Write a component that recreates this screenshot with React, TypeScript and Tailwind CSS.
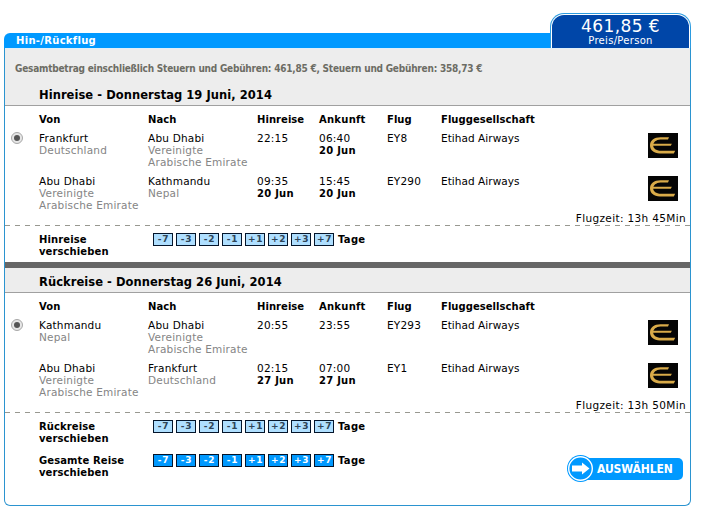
type Stop = {
  city: string
  country: string[]
}

type Segment = {
  from: Stop
  to: Stop
  departure: string
  departureDay?: string
  arrival: string
  arrivalDay?: string
  flight: string
}

type Trip = {
  title: string
  shiftLabel: string
  duration: string
  segments: Segment[]
}

const shifts = ['-7', '-3', '-2', '-1', '+1', '+2', '+3', '+7']

const abuDhabi: Stop = { city: 'Abu Dhabi', country: ['Vereinigte', 'Arabische Emirate'] }
const frankfurt: Stop = { city: 'Frankfurt', country: ['Deutschland'] }
const kathmandu: Stop = { city: 'Kathmandu', country: ['Nepal'] }

const trips: Trip[] = [
  {
    title: 'Hinreise - Donnerstag 19 Juni, 2014',
    shiftLabel: 'Hinreise',
    duration: '13h 45Min',
    segments: [
      { from: frankfurt, to: abuDhabi, departure: '22:15', arrival: '06:40', arrivalDay: '20 Jun', flight: 'EY8' },
      { from: abuDhabi, to: kathmandu, departure: '09:35', departureDay: '20 Jun', arrival: '15:45', arrivalDay: '20 Jun', flight: 'EY290' },
    ],
  },
  {
    title: 'Rückreise - Donnerstag 26 Juni, 2014',
    shiftLabel: 'Rückreise',
    duration: '13h 50Min',
    segments: [
      { from: kathmandu, to: abuDhabi, departure: '20:55', arrival: '23:55', flight: 'EY293' },
      { from: abuDhabi, to: frankfurt, departure: '02:15', departureDay: '27 Jun', arrival: '07:00', arrivalDay: '27 Jun', flight: 'EY1' },
    ],
  },
]

function AirlineLogo() {
  return (
    <svg className="mt-px h-[25px] w-[30px]" viewBox="0 0 30 25">
      <rect width="30" height="25" fill="#050505" />
      <g fill="#d9ab49">
        <path d="M21 4.2 20 6.4H12.5C8 6.6 5.2 9.2 5.2 12.3S8 17.8 13 17.8H27.2L25.8 20.4H12C5.5 20.4 2 17 2 12.3S6 4.2 12.5 4.2Z" />
        <path d="M5 10.8H23.8L22.8 12.8H5Z" />
      </g>
    </svg>
  )
}

function Place({ stop }: { stop: Stop }) {
  return (
    <div className="whitespace-nowrap">
      <div>{stop.city}</div>
      {stop.country.map((line) => (
        <div key={line} className="text-[#858585]">{line}</div>
      ))}
    </div>
  )
}

function Time({ time, day }: { time: string; day?: string }) {
  return (
    <div>
      <div>{time}</div>
      {day && <div className="pt-px text-[10px] font-bold tracking-[0.25px]">{day}</div>}
    </div>
  )
}

function ShiftRow({ label, solid = false }: { label: string; solid?: boolean }) {
  return (
    <div className="flex h-[29px] items-start pl-[34px] text-[10px] font-bold tracking-[0.1px]">
      <div className="w-[114px] pt-px">
        {label}
        <br />
        verschieben
      </div>
      <div className="flex gap-[3px]">
        {shifts.map((shift) => (
          <button
            key={shift}
            className={
              solid
                ? 'h-[13px] w-5 border border-[#04152b] bg-[#0099ff] pl-px text-[9px] leading-[11px] tracking-[0.7px] text-white'
                : 'h-[13px] w-5 border border-[#04152b] bg-[#afdfff] pl-px text-[9px] leading-[11px] tracking-[0.7px] text-[#2d4457]'
            }
          >
            {shift}
          </button>
        ))}
      </div>
      <div className="pt-px pl-1 tracking-[0.3px]">Tage</div>
    </div>
  )
}

function TripSection({ trip }: { trip: Trip }) {
  return (
    <section>
      <h2 className="flex h-[25px] items-center border-b border-[#a0a0a0] bg-[#ededed] pt-[4px] pl-[34px] text-[11.5px] font-bold tracking-[0.05px]">
        {trip.title}
      </h2>
      <div className="grid h-[26px] grid-cols-[109px_109px_62px_68px_54px_1fr] items-center pt-px pl-[34px] text-[10px] font-bold tracking-[0.05px]">
        <div>Von</div>
        <div>Nach</div>
        <div>Hinreise</div>
        <div className="tracking-[0.25px]">Ankunft</div>
        <div>Flug</div>
        <div>Fluggesellschaft</div>
      </div>
      <div className="flex">
        <div className="w-[34px] pl-1.5">
          <div className="flex h-3 w-3 items-center justify-center rounded-full border border-[#a8a8a8] bg-[#e6e6e6]">
            <div className="h-1.5 w-1.5 rounded-full bg-[#555]" />
          </div>
        </div>
        <div className="flex-1">
          {trip.segments.map((segment) => (
            <div key={segment.flight} className="grid h-[43px] grid-cols-[109px_109px_62px_68px_54px_1fr_42px]">
              <Place stop={segment.from} />
              <Place stop={segment.to} />
              <Time time={segment.departure} day={segment.departureDay} />
              <Time time={segment.arrival} day={segment.arrivalDay} />
              <div>{segment.flight}</div>
              <div className="tracking-[0.05px]">Etihad Airways</div>
              <AirlineLogo />
            </div>
          ))}
        </div>
      </div>
      <div className="-mt-[6px] h-[13px] pr-1 text-right tracking-[0.35px]">Flugzeit: {trip.duration}</div>
      <div className="h-px bg-[repeating-linear-gradient(90deg,#989890_0_5px,#fff_5px_10px)]" />
      <div className="pt-[7px]">
        <ShiftRow label={trip.shiftLabel} />
      </div>
    </section>
  )
}

function SelectButton() {
  return (
    <button className="relative mt-px flex h-[27px] w-[116px] items-center">
      <span className="ml-4 flex h-[22px] w-[100px] items-center rounded-[5px] bg-[#0099ff] pl-[14px] font-['DejaVu_Sans_Condensed','DejaVu_Sans',sans-serif] text-[12px] font-bold tracking-[-0.1px] text-white">
        AUSWÄHLEN
      </span>
      <svg className="absolute top-0 left-0 h-[27px] w-[27px]" viewBox="0 0 27 27">
        <circle cx="13.5" cy="13.5" r="13.5" fill="#0099ff" />
        <circle cx="13.5" cy="13.5" r="11.8" fill="none" stroke="#fff" strokeWidth="1.4" />
        <path d="M5 10.5h10V7.5l7.5 6-7.5 6v-3H5Z" fill="#fff" />
      </svg>
    </button>
  )
}

export default function App() {
  return (
    <div className="h-[512px] w-[701px] overflow-hidden bg-white pt-[13px] pl-1 font-['DejaVu_Sans',sans-serif] text-[10.5px] leading-[12px] tracking-[0.2px] text-black">
      <div className="w-[687px]">
        <header className="flex h-[35px] items-end">
          <div className="flex h-[15px] flex-1 items-center rounded-tl-[6px] bg-[#0099ff] pt-px pl-3 text-[10px] font-bold tracking-[0.3px] text-white">
            Hin-/Rückflug
          </div>
          <div className="h-[35px] w-[141px] rounded-t-[14px] border border-b-0 border-[#2b9be0] bg-white px-px pt-px">
            <div className="h-[33px] rounded-t-[12px] bg-[#0046a8] pt-[2px] text-center text-white">
              <div className="text-[17px] leading-[18px] tracking-[0.4px]">461,85 €</div>
              <div className="text-[10px] leading-[11px] tracking-[0.3px]">Preis/Person</div>
            </div>
          </div>
        </header>
        <main className="h-[458px] rounded-b-[6px] border border-t-0 border-[#2b94d0]">
          <div className="h-[33px] border-t border-[#e0f0fa] bg-[#ededed] pt-[14px] pl-2.5 font-['DejaVu_Sans_Condensed','DejaVu_Sans',sans-serif] text-[10px] font-bold tracking-[-0.22px] whitespace-nowrap text-[#6c6c64]">
            Gesamtbetrag einschließlich Steuern und Gebühren: 461,85 €, Steuern und Gebühren: 358,73 €
          </div>
          <TripSection trip={trips[0]} />
          <div className="h-1.5 bg-[#666]" />
          <TripSection trip={trips[1]} />
          <div className="mt-[5px] flex items-start justify-between pr-[7px]">
            <ShiftRow label="Gesamte Reise" solid />
            <SelectButton />
          </div>
        </main>
      </div>
    </div>
  )
}
